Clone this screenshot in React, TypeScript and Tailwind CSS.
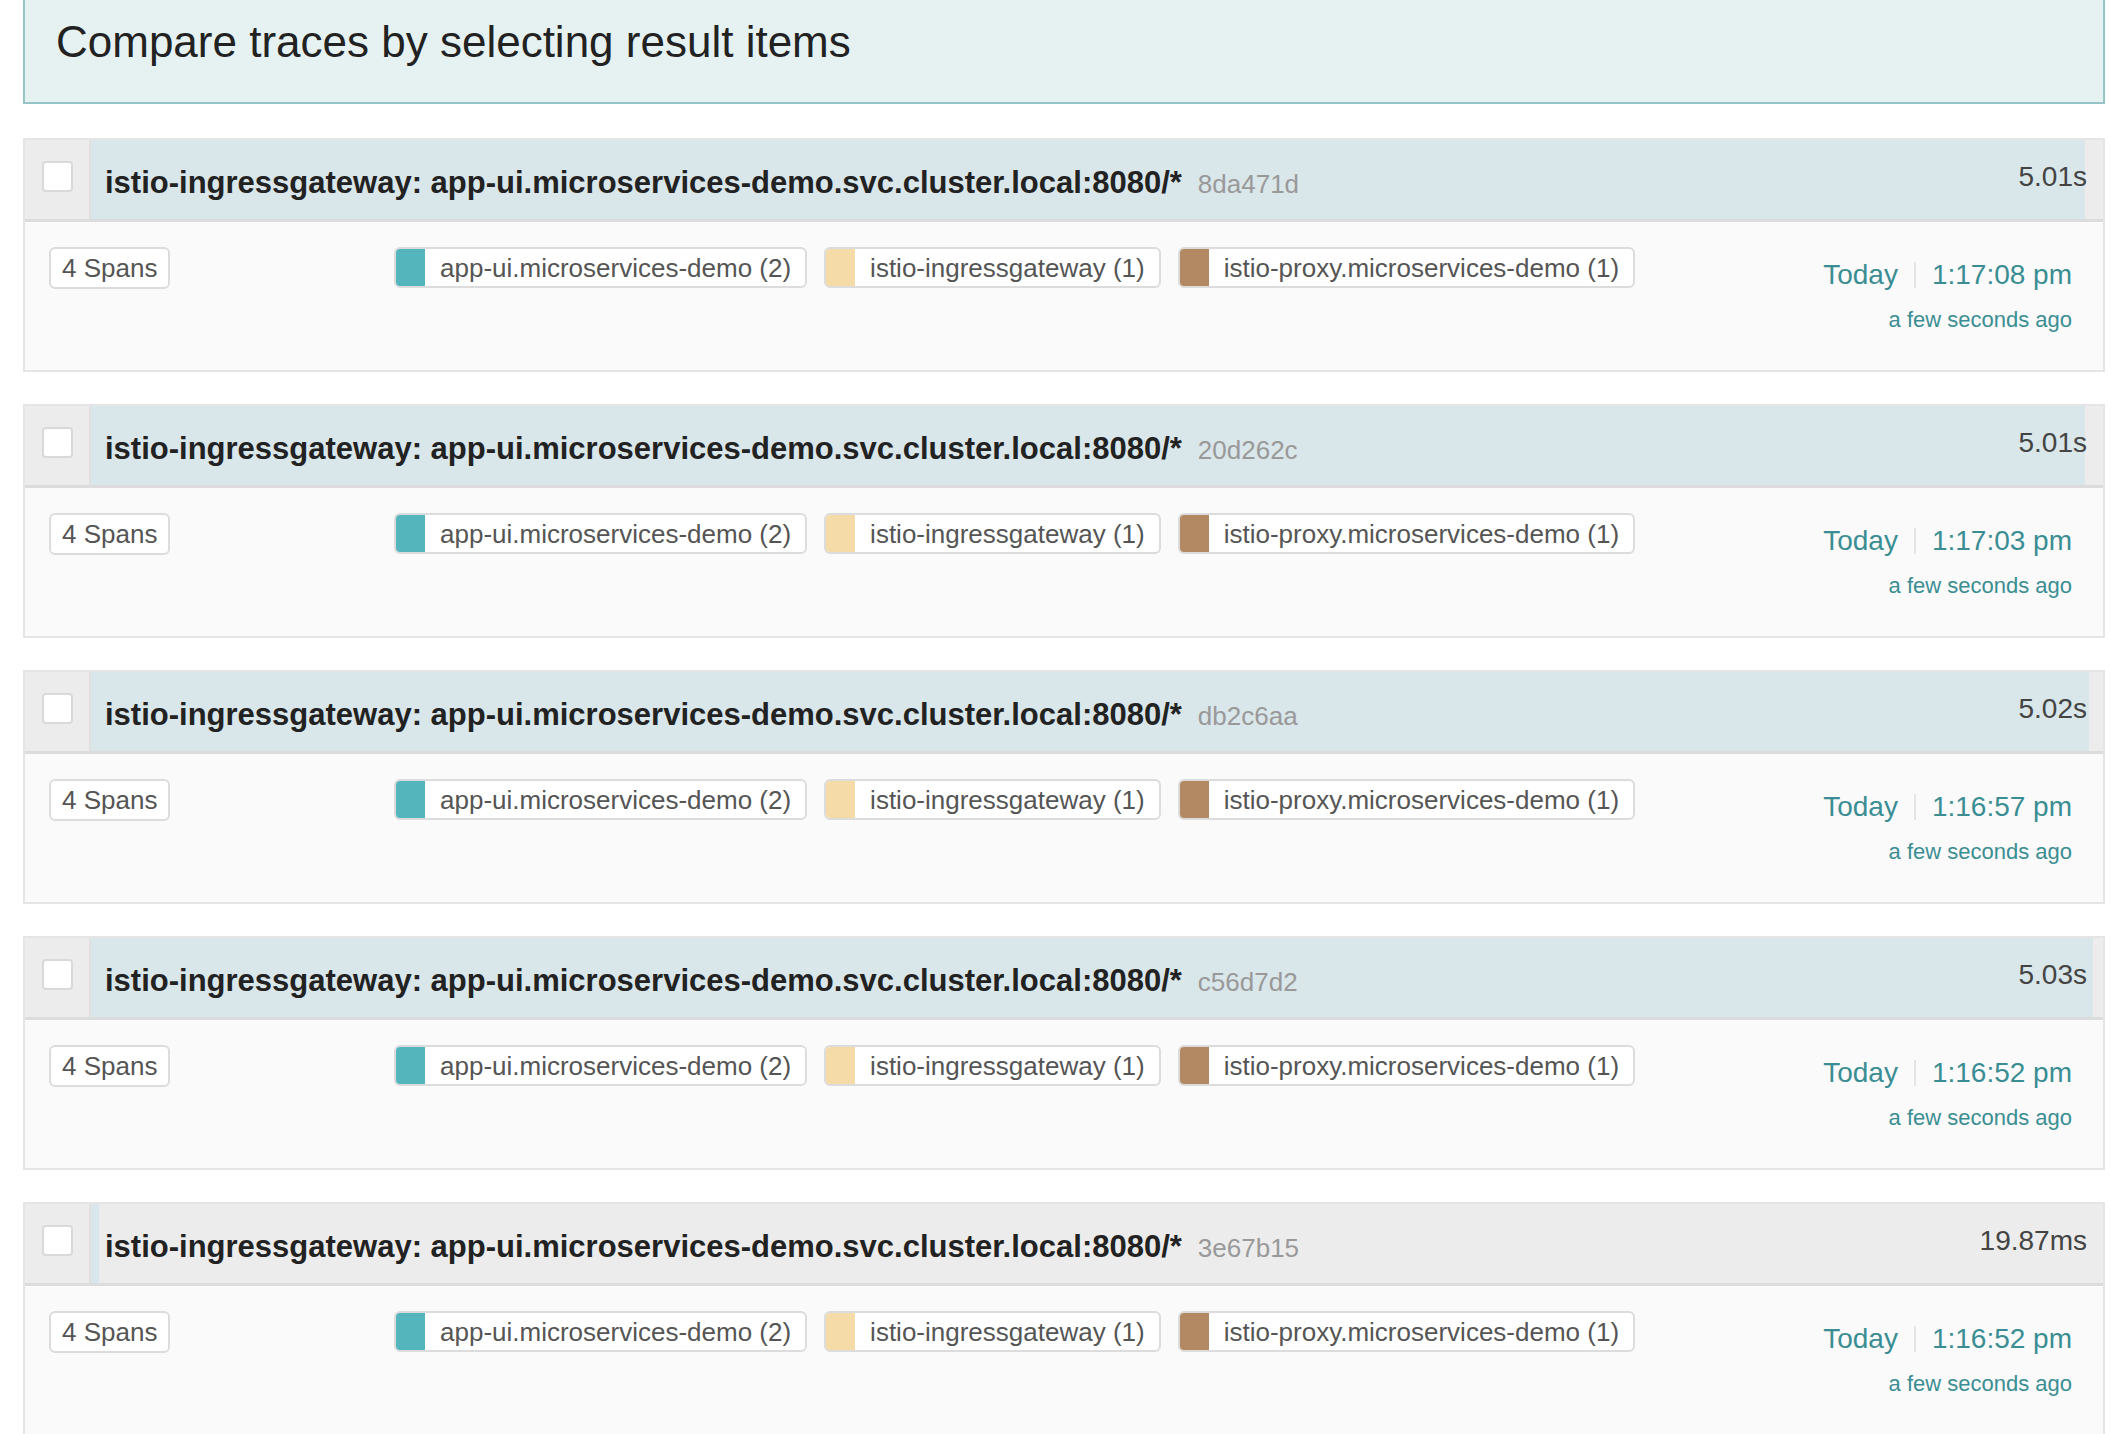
import React from "react";

type Row = { id: string; dur: string; ms: number; time: string };

const rows: Row[] = [
  { id: "8da471d", dur: "5.01s", ms: 5010, time: "1:17:08 pm" },
  { id: "20d262c", dur: "5.01s", ms: 5010, time: "1:17:03 pm" },
  { id: "db2c6aa", dur: "5.02s", ms: 5020, time: "1:16:57 pm" },
  { id: "c56d7d2", dur: "5.03s", ms: 5030, time: "1:16:52 pm" },
  { id: "3e67b15", dur: "19.87ms", ms: 19.87, time: "1:16:52 pm" },
];

const MAX = 5055;

const services = [
  { name: "app-ui.microservices-demo (2)", color: "bg-[#55b5bd]" },
  { name: "istio-ingressgateway (1)", color: "bg-[#f4dba7]" },
  { name: "istio-proxy.microservices-demo (1)", color: "bg-[#b38963]" },
];

function Tag({ name, color }: { name: string; color: string }) {
  return (
    <div className="flex h-[41px] items-stretch overflow-hidden rounded-[6px] border-2 border-[#dcdcdc] bg-white">
      <div className={`w-[29px] ${color}`} />
      <div className="flex items-center pl-[15px] pr-[14px] text-[26px] leading-none text-[#555]">
        {name}
      </div>
    </div>
  );
}

function TraceRow({ row }: { row: Row }) {
  const pct = (row.ms / MAX) * 100;
  return (
    <div className="border-2 border-[#e5e5e5]">
      <div className="flex h-[82px] border-b-[3px] border-[#dcdcdc] bg-[#ececec]">
        <div className="flex w-[66px] shrink-0 items-center justify-center border-r-2 border-[#e0e0e0] pb-[7px]">
          <div className="h-[31px] w-[31px] rounded-[4px] border-2 border-[#d9d9d9] bg-white" />
        </div>
        <div className="relative flex flex-1 items-center justify-between pl-[14px] pr-[16px]">
          <div className="absolute inset-y-0 left-0 bg-[#d9e6ea]" style={{ width: `${pct}%` }} />
          <div className="relative mt-[5px] flex items-baseline gap-[16px] whitespace-nowrap">
            <span className="text-[31px] font-bold leading-none text-[#222]">
              istio-ingressgateway: app-ui.microservices-demo.svc.cluster.local:8080/*
            </span>
            <span className="text-[26px] leading-none text-[#999]">{row.id}</span>
          </div>
          <div className="relative mb-[6px] text-[28px] leading-none text-[#444]">{row.dur}</div>
        </div>
      </div>
      <div className="flex h-[148px] bg-[#fafafa] pl-[24px] pr-[31px] pt-[25px]">
        <div className="w-[345px] shrink-0">
          <div className="inline-flex h-[42px] items-center rounded-[6px] border-2 border-[#dcdcdc] bg-white px-[11px] text-[26px] leading-none text-[#555]">
            4 Spans
          </div>
        </div>
        <div className="flex items-start gap-[17px]">
          {services.map((s) => (
            <Tag key={s.name} name={s.name} color={s.color} />
          ))}
        </div>
        <div className="ml-auto mt-[14px] flex flex-col items-end text-[#3a8e93]">
          <div className="flex items-center text-[28px] leading-none">
            <span>Today</span>
            <span className="mx-[16px] h-[26px] w-[2px] bg-[#e4e4e4]" />
            <span>{row.time}</span>
          </div>
          <div className="mt-[20px] text-[22px] leading-none">a few seconds ago</div>
        </div>
      </div>
    </div>
  );
}

export default function App() {
  return (
    <div
      className="min-h-screen bg-white pl-[23px]"
      style={{ fontFamily: '"Liberation Sans", Arial, sans-serif' }}
    >
      <div className="flex w-[2082px] flex-col">
        <div className="h-[104px] border-x-2 border-b-2 border-[#95c5c5] bg-[#e6f2f2] pl-[31px] pt-[20px]">
          <h1 className="text-[44px] leading-none text-[#222]">Compare traces by selecting result items</h1>
        </div>
        <div className="mt-[34px] flex flex-col gap-[32px]">
          {rows.map((r) => (
            <TraceRow key={r.id} row={r} />
          ))}
        </div>
      </div>
    </div>
  );
}
